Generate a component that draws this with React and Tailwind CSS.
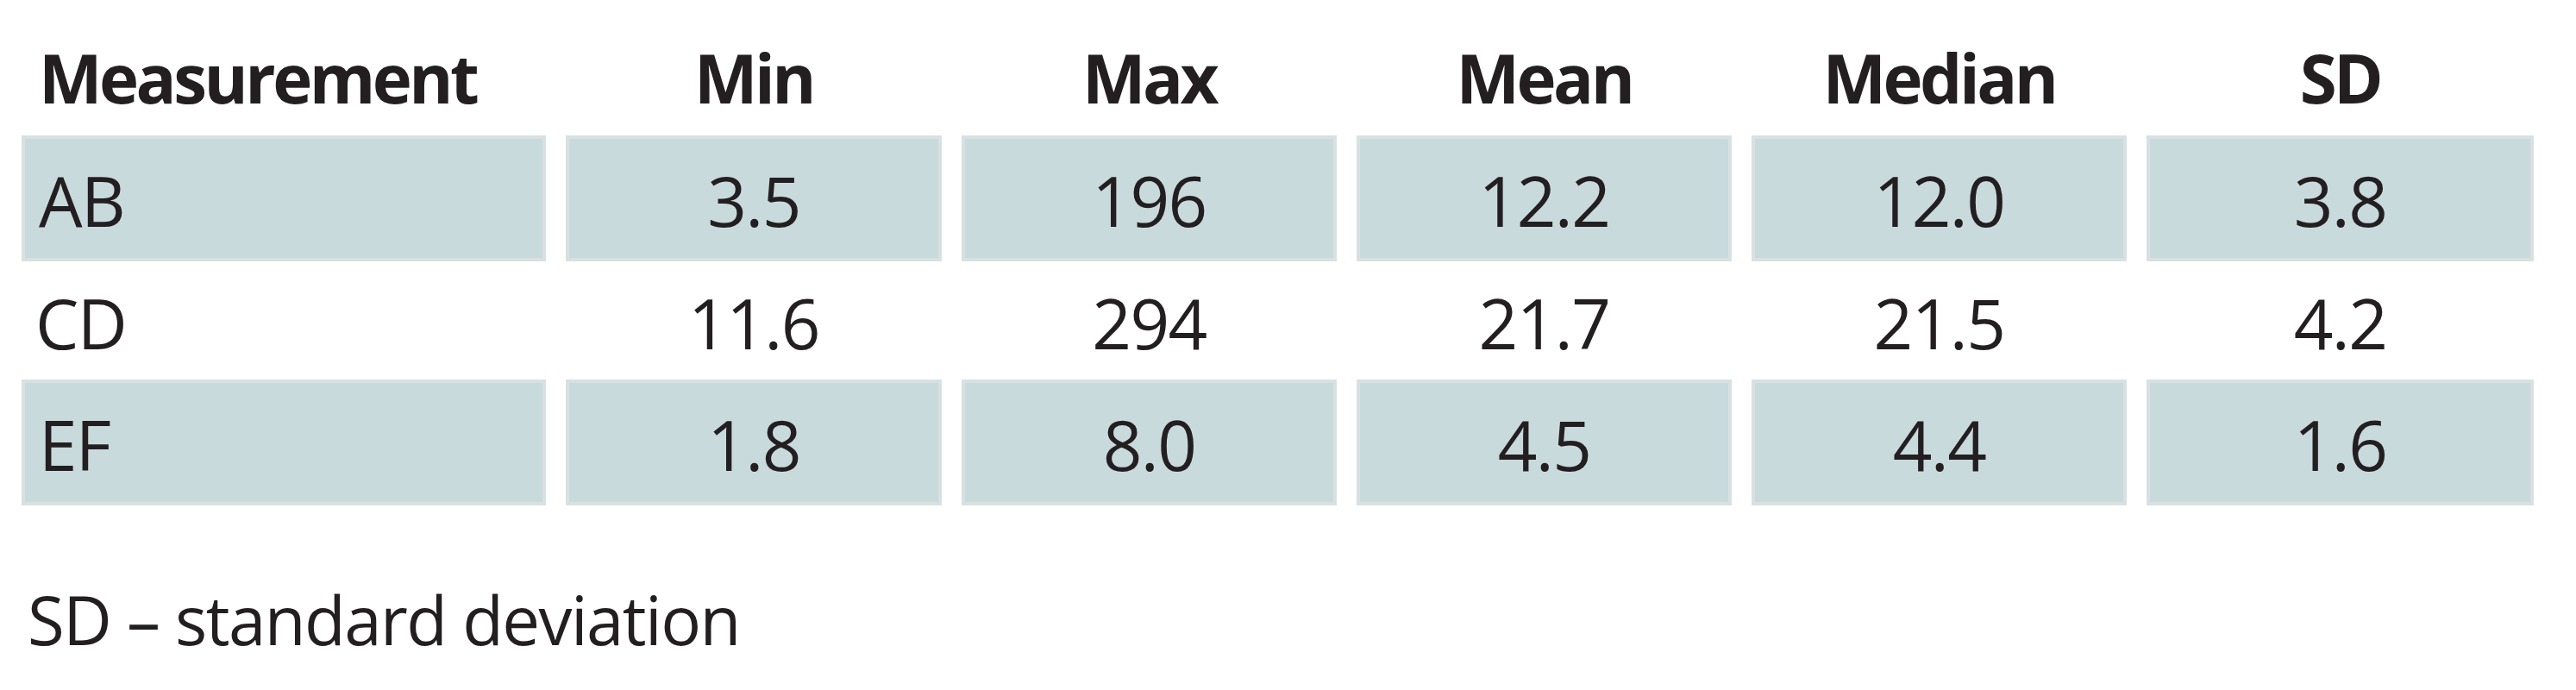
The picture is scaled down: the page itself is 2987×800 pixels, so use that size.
import React from 'react'

const columns = ['Measurement', 'Min', 'Max', 'Mean', 'Median', 'SD']

const rows = [
  { name: 'AB', values: ['3.5', '196', '12.2', '12.0', '3.8'], shaded: true, height: 'h-[146px]' },
  { name: 'CD', values: ['11.6', '294', '21.7', '21.5', '4.2'], shaded: false, height: 'h-[137px]' },
  { name: 'EF', values: ['1.8', '8.0', '4.5', '4.4', '1.6'], shaded: true, height: 'h-[146px]' },
]

const gridCols = 'grid grid-cols-[608px_436px_435px_435px_435px_449px] gap-x-[23px]'

function Row({ row }) {
  const cell = row.shaded
    ? 'bg-[#c9dadd] border-[4px] border-[#d8e1e2]'
    : ''
  return (
    <div className={`${gridCols} ${row.height} tracking-[-0.02em]`}>
      <div className={`${cell} flex items-center pl-4 pt-1`}>{row.name}</div>
      {row.values.map((v, i) => (
        <div key={i} className={`${cell} flex items-center justify-center pt-1`}>
          {v}
        </div>
      ))}
    </div>
  )
}

export default function App() {
  return (
    <div
      className="w-[2987px] h-[800px] bg-white text-[#231f20] text-[80px] leading-none overflow-hidden"
      style={{ fontFamily: '"Open Sans", "Noto Sans", sans-serif' }}
    >
      <div className="pl-[25px]">
        {/* header */}
        <div className={`${gridCols} h-[157px] pt-[51px] font-bold text-[78px] tracking-[-0.045em]`}>
          {columns.map((c, i) => (
            <div key={c} className={i === 0 ? 'pl-5' : 'text-center'}>
              {c}
            </div>
          ))}
        </div>

        {rows.map((r) => (
          <Row key={r.name} row={r} />
        ))}
      </div>

      <p className="mt-[93px] pl-[32px] text-[78px] tracking-[-0.02em]">SD – standard deviation</p>
    </div>
  )
}
